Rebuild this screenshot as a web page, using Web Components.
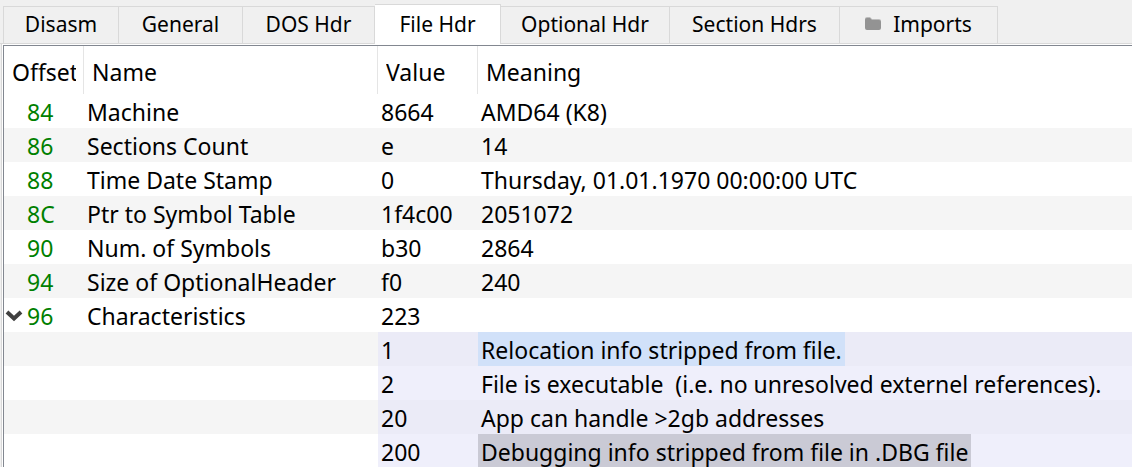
<!DOCTYPE html>
<html lang="en">
<head>
<meta charset="utf-8">
<title>File Hdr</title>
<style>
html, body { margin: 0; height: 100%; }
body { background: #f0f0f0; overflow: hidden; color: #000; font-family: "Noto Sans", "Open Sans", sans-serif; }
</style>
</head>
<body>
<pe-viewer>
  <pe-tabs slot="tabs">
    <pe-tab>Disasm</pe-tab>
    <pe-tab>General</pe-tab>
    <pe-tab>DOS Hdr</pe-tab>
    <pe-tab selected>File Hdr</pe-tab>
    <pe-tab>Optional Hdr</pe-tab>
    <pe-tab>Section Hdrs</pe-tab>
    <pe-tab><folder-icon slot="icon"></folder-icon>Imports</pe-tab>
  </pe-tabs>
  <pe-table></pe-table>
</pe-viewer>
<script>
function define(name, html, setup) {
  const template = document.createElement('template');
  template.innerHTML = html;
  customElements.define(name, class extends HTMLElement {
    constructor() {
      super();
      this.attachShadow({ mode: 'open' }).append(template.content.cloneNode(true));
    }
    connectedCallback() { if (setup) setup(this, this.shadowRoot); }
  });
}

define('folder-icon', `
<style>:host { display: block; } svg { display: block; }</style>
<svg width="16" height="14" viewBox="0 0 16 14" aria-hidden="true"><path fill="#bdbdbd" d="M0 2Q0 0 2 0H5L7 2H14Q16 2 16 4V6H0Z"/><path fill="#939393" d="M0 3Q0 1 2 1H5L7 3H14Q16 3 16 5V11Q16 13 14 13H2Q0 13 0 11Z"/></svg>`);

define('pe-tab', `
<style>
:host { display: flex; height: 37px; }
button { flex: 1; display: flex; align-items: center; justify-content: center; gap: 12px; margin: 0; padding: 0 0 2px; border: 1px solid #d9d9d9; border-width: 1px 1px 0 0; background: #f0f0f0; color: inherit; font: inherit; white-space: nowrap; }
:host([selected]) { height: 40px; }
:host([selected]) button { background: #fff; }
:host(:first-child) button { border-left-width: 1px; }
</style>
<button type="button" role="tab"><slot name="icon"></slot><span><slot></slot></span></button>`,
(host, root) => {
  root.querySelector('button').setAttribute('aria-selected', host.hasAttribute('selected'));
});

define('pe-tabs', `
<style>
:host { display: block; font: 21px/28px "Noto Sans", sans-serif; }
div { display: grid; grid-template-columns: 116px 124px 132px 126px 169px 170px 158px; align-items: end; height: 44px; padding-left: 3px; box-sizing: border-box; }
::slotted(*) { margin-bottom: 1px; }
::slotted([selected]) { margin-bottom: 0; }
</style>
<div role="tablist"><slot></slot></div>`);

define('pe-viewer', `
<style>
:host { display: flex; flex-direction: column; height: 100vh; }
.bar { background: linear-gradient(#d9d9d9, #d9d9d9) 0 100% / 100% 1px no-repeat; }
.pane { flex: 1; min-height: 0; margin-left: 1px; padding: 1px 0 0 1px; border-left: 1px solid #d9d9d9; background: #fff; }
.frame { height: 100%; overflow: hidden; border: 1px solid #828790; border-width: 1px 0 0 1px; box-sizing: border-box; }
</style>
<div class="bar"><slot name="tabs"></slot></div>
<div class="pane"><div class="frame"><slot></slot></div></div>`);

define('tree-arrow', `
<style>
:host { display: block; white-space: normal; }
button { display: block; width: 18px; height: 12px; margin: 0; padding: 0; border: 0; background: none; }
svg { display: block; }
</style>
<button type="button" aria-label="Collapse" aria-expanded="true"><svg width="18" height="12" viewBox="0 0 18 12"><path d="M2 2L9 8.5L16 2" fill="none" stroke="#404040" stroke-width="4"/></svg></button>`);

const rows = [
  ['84', 'Machine', '8664', 'AMD64 (K8)'],
  ['86', 'Sections Count', 'e', '14'],
  ['88', 'Time Date Stamp', '0', 'Thursday, 01.01.1970 00:00:00 UTC'],
  ['8C', 'Ptr to Symbol Table', '1f4c00', '2051072'],
  ['90', 'Num. of Symbols', 'b30', '2864'],
  ['94', 'Size of OptionalHeader', 'f0', '240'],
  ['96', 'Characteristics', '223', '', 'open'],
  ['', '', '1', 'Relocation info stripped from file.', 'flag hover'],
  ['', '', '2', 'File is executable  (i.e. no unresolved externel references).', 'flag'],
  ['', '', '20', 'App can handle >2gb addresses', 'flag'],
  ['', '', '200', 'Debugging info stripped from file in .DBG file', 'flag current']
];

define('pe-table', `
<style>
:host { display: block; font-size: 23px; line-height: 34px; }
table { width: 100%; table-layout: fixed; border-collapse: separate; border-spacing: 0; }
.c1 { width: 80px; } .c2 { width: 294px; } .c3 { width: 100px; }
th { height: 48px; padding: 0 0 0 8px; font-weight: 400; text-align: left; box-sizing: border-box; background: linear-gradient(#e5e5e5, #e5e5e5) 100% 0 / 1px 100% no-repeat; }
th:last-child { background: none; }
th span { display: block; overflow: hidden; padding-top: 4px; }
th:first-child span { width: 64px; }
td { height: 34px; padding: 0 0 0 3px; line-height: 32px; padding-top: 2px; box-sizing: border-box; white-space: pre; }
tbody tr:nth-child(even) { background: #f5f5f5; }
td:first-child { padding-left: 1px; color: #008000; }
.off { display: flex; align-items: center; gap: 4px; height: 32px; padding-left: 22px; }
.open .off { padding-left: 0; }
.flag td:nth-child(n+3) { background: #efeffb; }
.flag:nth-child(even) td:nth-child(n+3) { background: #ebebf7; }
.flag td:last-child { padding: 0; }
.flag td:last-child span { display: inline-block; vertical-align: top; padding: 2px 3px 0; }
.hover td:last-child span { background: #d1e1f9; }
.current td:last-child span { background: #cacad5; }
</style>
<table>
<colgroup><col class="c1"><col class="c2"><col class="c3"><col></colgroup>
<thead><tr><th scope="col"><span>Offset</span></th><th scope="col"><span>Name</span></th><th scope="col"><span>Value</span></th><th scope="col"><span>Meaning</span></th></tr></thead>
<tbody></tbody>
</table>`,
(host, root) => {
  const body = root.querySelector('tbody');
  for (const [offset, name, value, meaning, cls] of rows) {
    const tr = body.insertRow();
    if (cls) tr.className = cls;
    const off = document.createElement('div');
    off.className = 'off';
    if (cls === 'open') off.append(document.createElement('tree-arrow'));
    off.append(offset);
    tr.insertCell().append(off);
    tr.insertCell().append(name);
    tr.insertCell().append(value);
    const span = document.createElement('span');
    span.textContent = meaning;
    tr.insertCell().append(span);
  }
});
</script>
</body>
</html>
